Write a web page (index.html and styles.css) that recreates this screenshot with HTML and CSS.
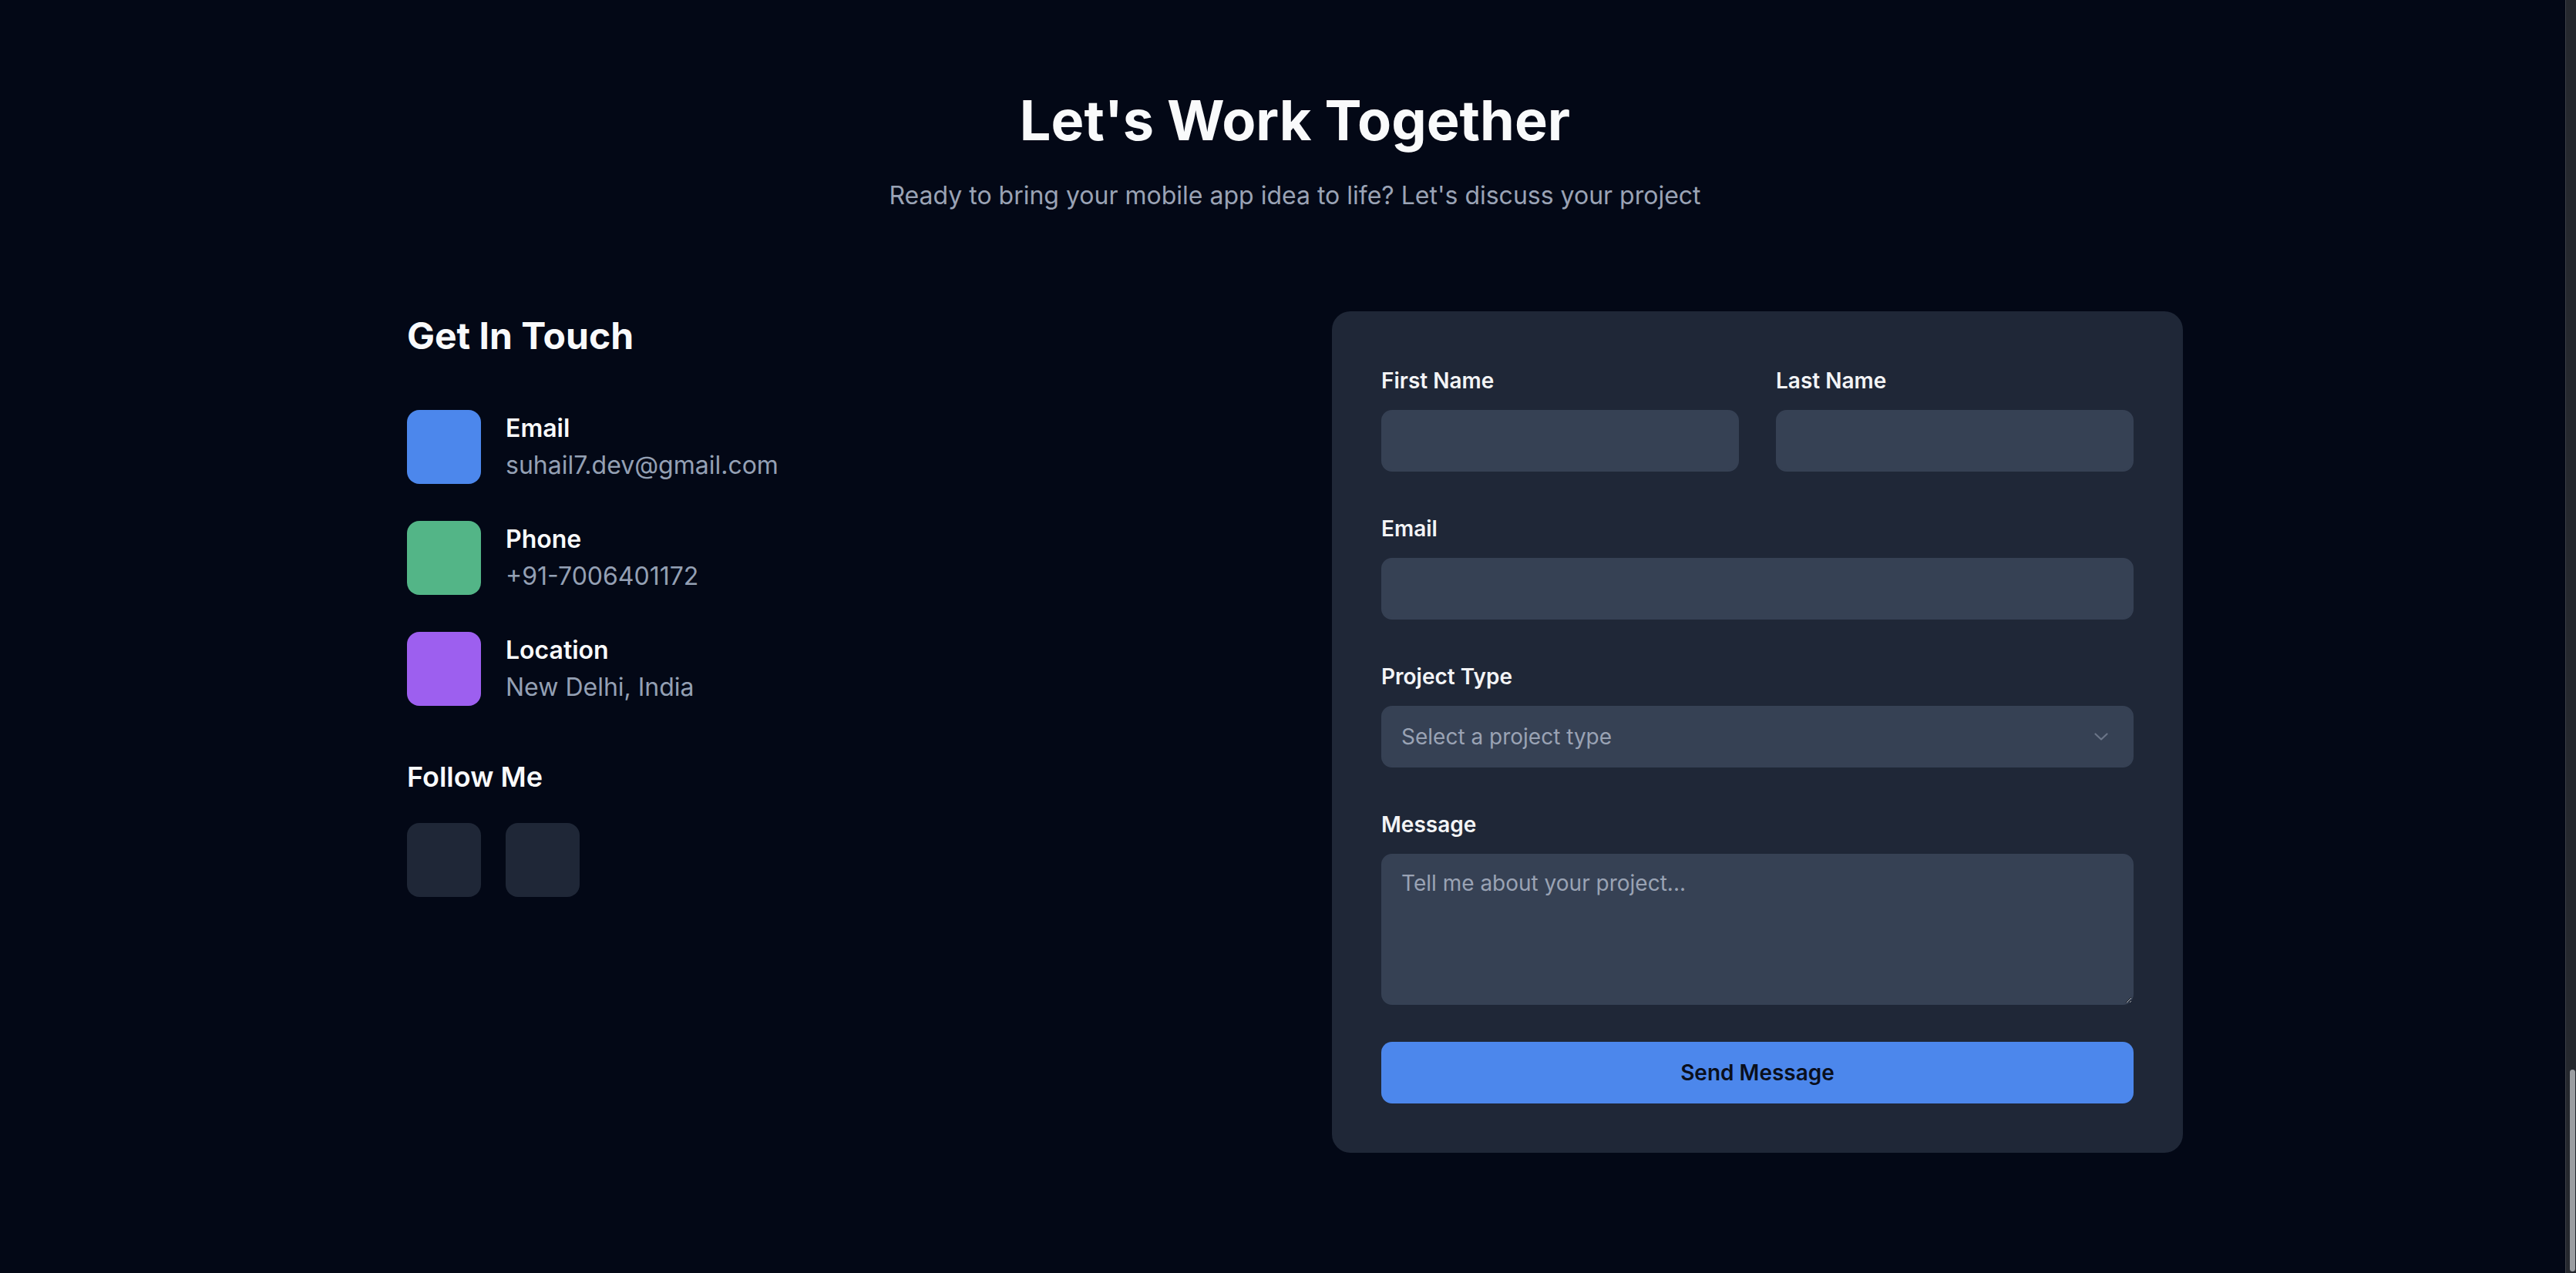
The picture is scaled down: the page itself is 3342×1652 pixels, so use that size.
FILE: index.html
```html
<!DOCTYPE html>
<html lang="en">
<head>
<meta charset="utf-8">
<title>Contact</title>
<link rel="stylesheet" href="styles.css">
</head>
<body>
<section class="contact">
  <div class="container">
    <header class="intro">
      <h2 class="title">Let's Work Together</h2>
      <p class="subtitle">Ready to bring your mobile app idea to life? Let's discuss your project</p>
    </header>
    <div class="grid">
      <div class="info">
        <h3 class="info-title">Get In Touch</h3>
        <ul class="items">
          <li class="item">
            <span class="badge badge-blue"></span>
            <div class="item-text">
              <div class="item-label">Email</div>
              <div class="item-value">suhail7.dev@gmail.com</div>
            </div>
          </li>
          <li class="item">
            <span class="badge badge-green"></span>
            <div class="item-text">
              <div class="item-label">Phone</div>
              <div class="item-value">+91-7006401172</div>
            </div>
          </li>
          <li class="item">
            <span class="badge badge-purple"></span>
            <div class="item-text">
              <div class="item-label">Location</div>
              <div class="item-value">New Delhi, India</div>
            </div>
          </li>
        </ul>
        <h4 class="follow-title">Follow Me</h4>
        <div class="socials">
          <a class="social" href="#"></a>
          <a class="social" href="#"></a>
        </div>
      </div>
      <form class="card">
        <div class="row two">
          <div class="field">
            <label class="label">First Name</label>
            <input class="control" type="text">
          </div>
          <div class="field">
            <label class="label">Last Name</label>
            <input class="control" type="text">
          </div>
        </div>
        <div class="field">
          <label class="label">Email</label>
          <input class="control" type="email">
        </div>
        <div class="field">
          <label class="label">Project Type</label>
          <div class="select-wrap">
            <select class="control select">
              <option>Select a project type</option>
            </select>
            <svg class="chevron" width="18" height="10" viewBox="0 0 18 10"><path d="M1.5 1.5 L9 8.5 L16.5 1.5" fill="none" stroke="#6b7588" stroke-width="2.2" stroke-linecap="round" stroke-linejoin="round"/></svg>
          </div>
        </div>
        <div class="field">
          <label class="label">Message</label>
          <textarea class="control textarea" placeholder="Tell me about your project..."></textarea>
        </div>
        <button class="send" type="button">Send Message</button>
      </form>
    </div>
  </div>
</section>
<div class="scrollbar"><div class="thumb"></div></div>
</body>
</html>
```
FILE: styles.css
```css
html, body {
  margin: 0;
  padding: 0;
  background: #030816;
  height: 100%;
  overflow: hidden;
}
body {
  font-family: Inter, "Noto Sans", sans-serif;
  color: #f9fafb;
}
.contact {
  padding-top: 116px;
}
.container {
  width: 2304px;
  margin-left: 528px;
}
.intro {
  text-align: center;
  margin-bottom: 126px;
}
.title {
  margin: 0;
  font-size: 72px;
  line-height: 80px;
  font-weight: 700;
  color: #f9fafb;
}
.subtitle {
  margin: 34px 0 0;
  font-size: 32px;
  line-height: 48px;
  color: #9aa3b5;
}
.grid {
  display: grid;
  grid-template-columns: 1104px 1104px;
  column-gap: 96px;
  align-items: start;
}
.info-title {
  margin: 0 0 64px;
  font-size: 48px;
  line-height: 64px;
  font-weight: 700;
}
.items {
  list-style: none;
  margin: 0;
  padding: 0;
  display: flex;
  flex-direction: column;
  gap: 48px;
}
.item {
  display: flex;
  gap: 32px;
  align-items: flex-start;
}
.badge {
  width: 96px;
  height: 96px;
  border-radius: 16px;
  flex: none;
}
.badge-blue { background: #4c87ec; }
.badge-green { background: #53b587; }
.badge-purple { background: #9d5fef; }
.item-label {
  font-size: 32px;
  line-height: 48px;
  font-weight: 600;
  color: #f9fafb;
}
.item-value {
  font-size: 32px;
  line-height: 48px;
  color: #94a0b4;
}
.follow-title {
  margin: 64px 0 32px;
  font-size: 36px;
  line-height: 56px;
  font-weight: 600;
}
.socials {
  display: flex;
  gap: 32px;
}
.social {
  width: 96px;
  height: 96px;
  border-radius: 16px;
  background: #1f2737;
  display: block;
}
.card {
  background: #1f2737;
  border-radius: 24px;
  padding: 64px;
  display: flex;
  flex-direction: column;
  gap: 48px;
  margin: 0;
}
.row.two {
  display: grid;
  grid-template-columns: 1fr 1fr;
  column-gap: 48px;
}
.field {
  display: flex;
  flex-direction: column;
}
.label {
  font-size: 28px;
  line-height: 52px;
  font-weight: 600;
  margin-bottom: 12px;
  color: #f3f4f6;
}
.control {
  box-sizing: border-box;
  height: 80px;
  width: 100%;
  background: #364154;
  border: 2px solid #364154;
  border-radius: 14px;
  padding: 0 24px;
  font-family: Inter, "Noto Sans", sans-serif;
  font-size: 28px;
  color: #f9fafb;
  outline: none;
  margin: 0;
}
.select-wrap {
  position: relative;
}
.select {
  appearance: none;
  -webkit-appearance: none;
  color: #9aa3b4;
}
.chevron {
  position: absolute;
  right: 33px;
  top: 35px;
  pointer-events: none;
}
.textarea {
  height: 196px;
  padding: 16px 24px;
  line-height: 40px;
  resize: vertical;
  display: block;
}
.textarea::placeholder {
  color: #9aa3b4;
}
.send {
  height: 80px;
  width: 100%;
  border: none;
  border-radius: 14px;
  background: #4c87ec;
  color: #0a0f1c;
  font-family: Inter, "Noto Sans", sans-serif;
  font-size: 28px;
  font-weight: 600;
}
.scrollbar {
  position: fixed;
  top: 0;
  right: 0;
  width: 14px;
  height: 100%;
  background: #25282e;
  border-left: 1px solid #3d4047;
  box-sizing: border-box;
}
.thumb {
  position: absolute;
  left: 5px;
  right: 1px;
  top: 1388px;
  bottom: 2px;
  background: #9b9da1;
  border-radius: 5px;
}
```
